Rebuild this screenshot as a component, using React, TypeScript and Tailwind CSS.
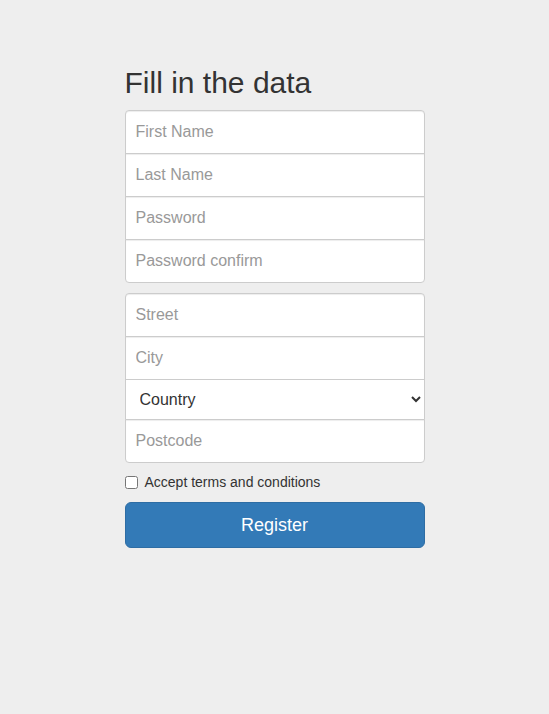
import { useState } from 'react';

const inputBase =
  'block w-full h-[44px] bg-white border border-[#ccc] px-[10px] text-[16px] text-[#555] placeholder:text-[#999] shadow-[inset_0_1px_1px_rgba(0,0,0,0.075)] outline-none focus:relative focus:z-10 focus:border-[#66afe9]';

const App = () => {
  const [accepted, setAccepted] = useState(false);

  return (
    <div className="min-h-screen bg-[#eee] font-['Liberation_Sans',Arial,sans-serif] text-[#333]">
      <form className="w-[300px] mx-auto pt-[66px]" onSubmit={(e) => e.preventDefault()}>
        <h2 className="text-[30px] leading-[33px] font-normal mb-[11px]">Fill in the data</h2>

        {/* Account details */}
        <div className="mb-[10px]">
          <input type="text" placeholder="First Name" className={`${inputBase} rounded-t-[4px]`} />
          <input type="text" placeholder="Last Name" className={`${inputBase} -mt-px`} />
          <input type="password" placeholder="Password" className={`${inputBase} -mt-px`} />
          <input type="password" placeholder="Password confirm" className={`${inputBase} -mt-px rounded-b-[4px]`} />
        </div>

        {/* Address */}
        <div>
          <input type="text" placeholder="Street" className={`${inputBase} rounded-t-[4px]`} />
          <input type="text" placeholder="City" className={`${inputBase} -mt-px`} />
          <select
            defaultValue=""
            className="block w-full h-[41px] -mt-px bg-white border border-[#ccc] px-[10px] text-[16px] text-[#333] outline-none"
          >
            <option value="" disabled>Country</option>
            <option value="pl">Poland</option>
            <option value="de">Germany</option>
            <option value="uk">United Kingdom</option>
          </select>
          <input type="text" placeholder="Postcode" className={`${inputBase} -mt-px rounded-b-[4px]`} />
        </div>

        <label className="flex items-center mt-[9px] text-[14px] leading-[20px] cursor-pointer">
          <input
            type="checkbox"
            checked={accepted}
            onChange={(e) => setAccepted(e.target.checked)}
            className="w-[13px] h-[13px] m-0 mr-[7px]"
          />
          Accept terms and conditions
        </label>

        <button
          type="submit"
          className="block w-full h-[46px] mt-[10px] bg-[#337ab7] border border-[#2e6da4] rounded-[6px] text-white text-[18px] hover:bg-[#286090]"
        >
          Register
        </button>
      </form>
    </div>
  );
};

export default App;
